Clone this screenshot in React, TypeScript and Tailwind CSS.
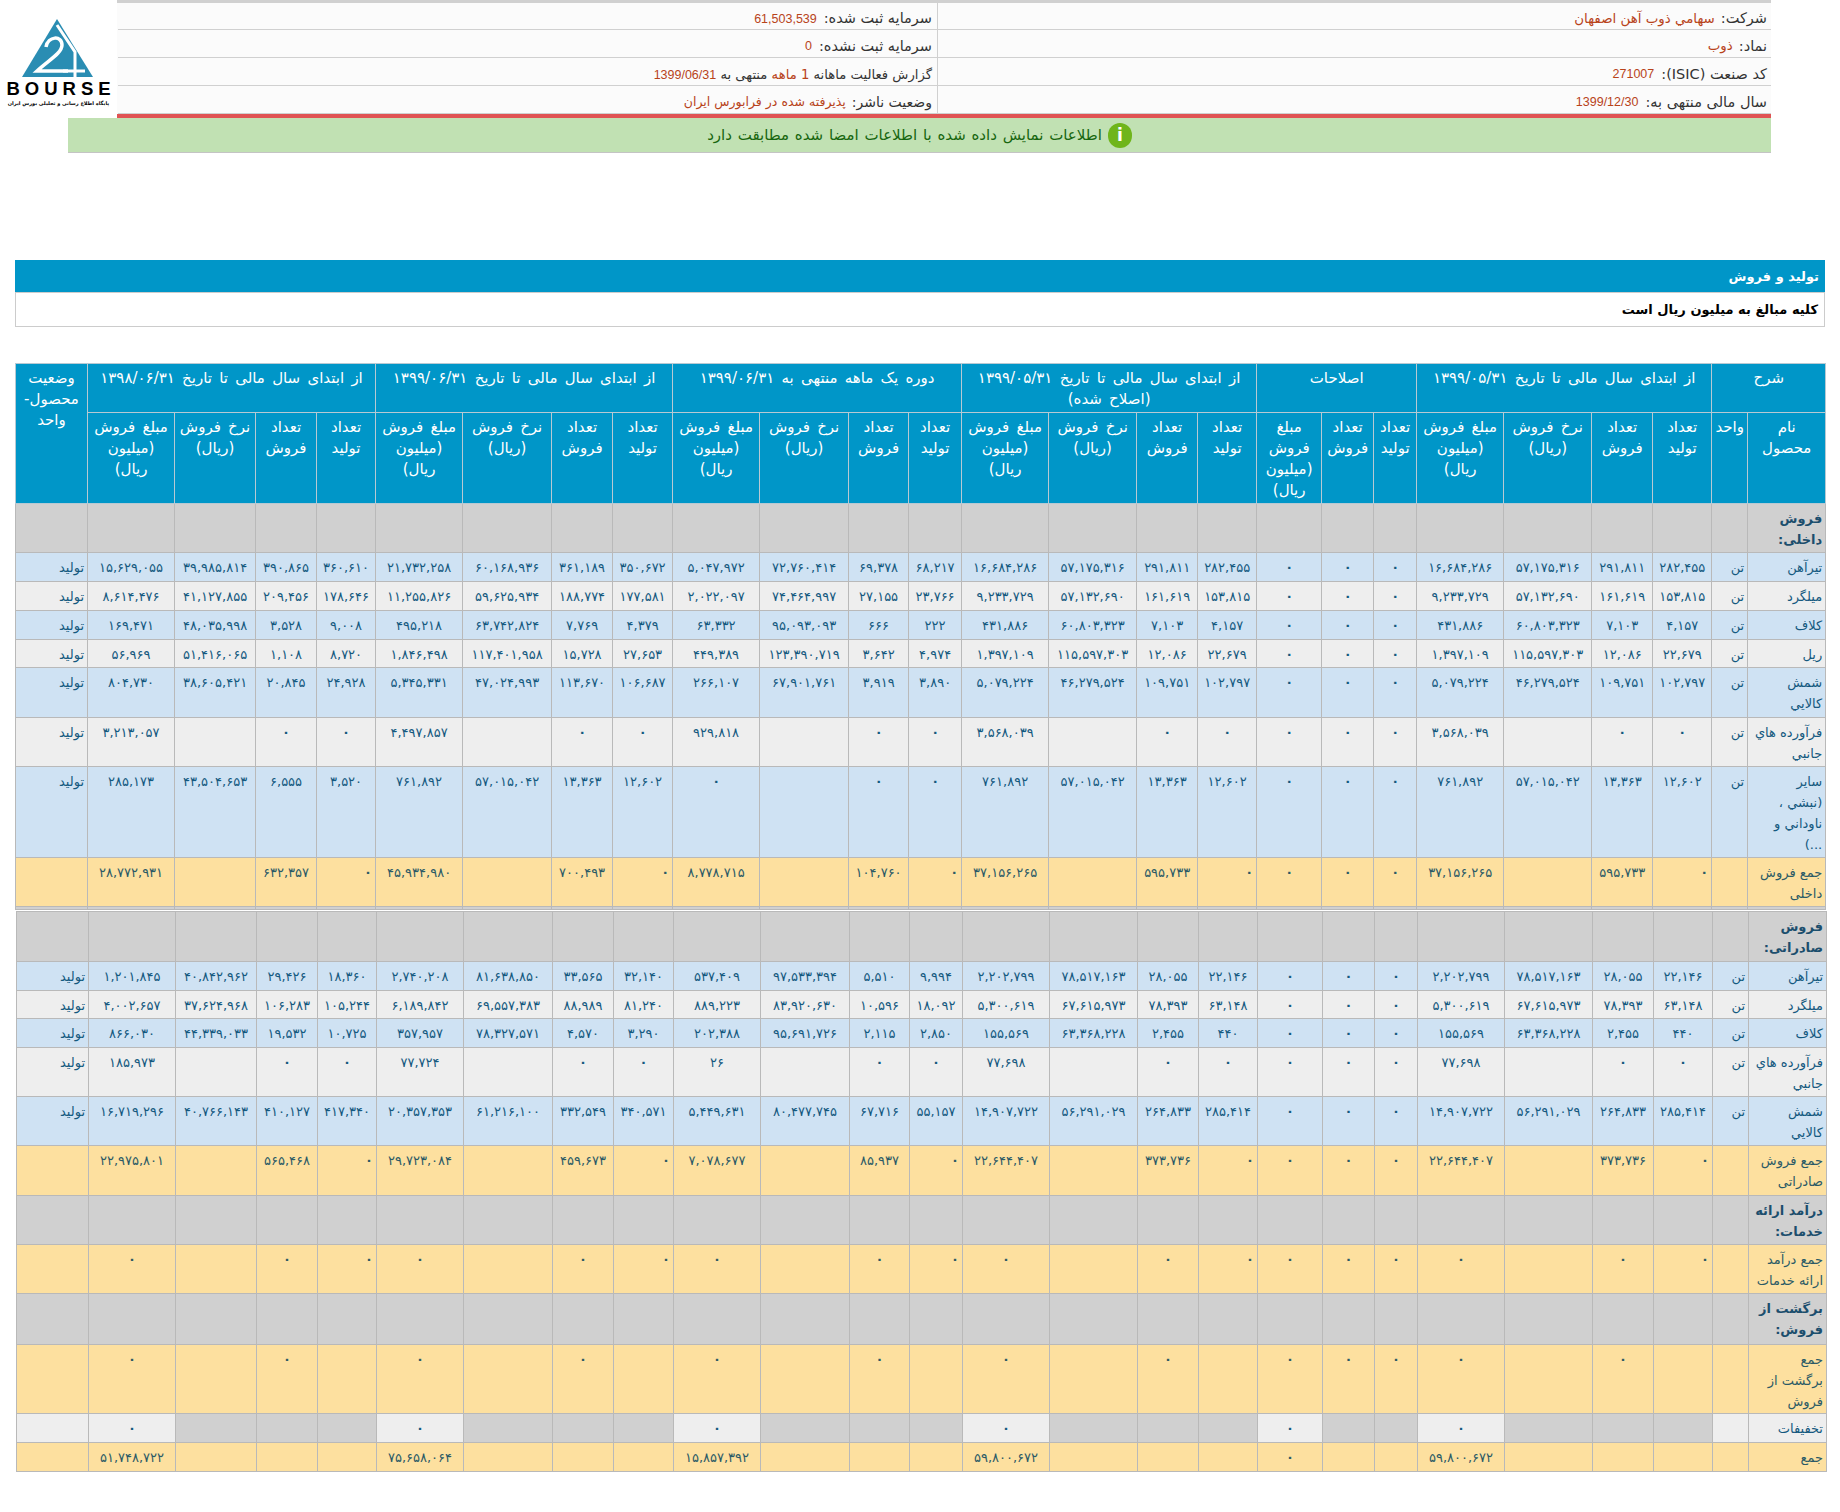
const fa = (s: string) => s.replace(/\d/g, (d) => "۰۱۲۳۴۵۶۷۸۹"[Number(d)]);

const colWidths = [
  "w-[78px]", "w-[36px]", "w-[59px]", "w-[61px]", "w-[88px]", "w-[87px]", "w-[43px]", "w-[52px]", "w-[65px]",
  "w-[59px]", "w-[61px]", "w-[88px]", "w-[87px]", "w-[53px]", "w-[60px]", "w-[89px]", "w-[87px]", "w-[60px]",
  "w-[61px]", "w-[89px]", "w-[87px]", "w-[59px]", "w-[61px]", "w-[81px]", "w-[87px]", "w-[72px]",
];

type Tone = "blue" | "gray" | "sum" | "section" | "discount";

interface Row {
  name: string;
  unit?: string;
  status?: string;
  tone: Tone;
  height: string;
  vals: string[];
}

const split = (s: string) => s.split(" ").map((v) => (v === "-" ? "" : v));

function product(name: string, tone: Tone, height: string, a: string, c: string, d: string, e: string): Row {
  return { name, tone, height, unit: "تن", status: "تولید", vals: split(`${a} 0 0 0 ${a} ${c} ${d} ${e}`) };
}

function total(name: string, height: string, a: string, c: string, d: string, e: string): Row {
  return { name, tone: "sum", height, vals: split(`${a} 0 0 0 ${a} ${c} ${d} ${e}`) };
}

function section(name: string, height: string): Row {
  return { name, tone: "section", height, vals: split(Array(23).fill("-").join(" ")) };
}

const domestic: Row[] = [
  section("فروش\nداخلی:", "h-[49px]"),
  product("تیرآهن", "blue", "h-[29px]", "282,455 291,811 57,175,316 16,684,286", "68,217 69,378 72,760,414 5,047,972", "350,672 361,189 60,168,936 21,732,258", "360,610 390,865 39,985,814 15,629,055"),
  product("میلگرد", "gray", "h-[29px]", "153,815 161,619 57,132,690 9,233,729", "23,766 27,155 74,464,997 2,022,097", "177,581 188,774 59,625,934 11,255,826", "178,646 209,456 41,127,855 8,614,476"),
  product("کلاف", "blue", "h-[29px]", "4,157 7,103 60,803,323 431,886", "222 666 95,093,093 63,332", "4,379 7,769 63,742,824 495,218", "9,008 3,528 48,035,998 169,471"),
  product("ریل", "gray", "h-[28px]", "22,679 12,086 115,597,303 1,397,109", "4,974 3,642 123,390,719 449,389", "27,653 15,728 117,401,958 1,846,498", "8,720 1,108 51,416,065 56,969"),
  product("شمش\nکالايي", "blue", "h-[50px]", "102,797 109,751 46,279,524 5,079,224", "3,890 3,919 67,901,761 266,107", "106,687 113,670 47,024,993 5,345,331", "24,928 20,845 38,605,421 804,730"),
  product("فرآورده هاي\nجانبي", "gray", "h-[49px]", "0 0 - 3,568,039", "0 0 - 929,818", "0 0 - 4,497,857", "0 0 - 3,213,057"),
  product("سایر\n(نبشي ،\nناوداني و\n...)", "blue", "h-[91px]", "12,602 13,363 57,015,042 761,892", "0 0 - 0", "12,602 13,363 57,015,042 761,892", "3,520 6,555 43,504,653 285,173"),
  total("جمع فروش\nداخلی", "h-[49px]", "0 595,733 - 37,156,265", "0 104,760 - 8,778,715", "0 700,493 - 45,934,980", "0 632,357 - 28,772,931"),
];

const exportRows: Row[] = [
  section("فروش\nصادراتی:", "h-[50px]"),
  product("تیرآهن", "blue", "h-[29px]", "22,146 28,055 78,517,163 2,202,799", "9,994 5,510 97,533,394 537,409", "32,140 33,565 81,638,850 2,740,208", "18,360 29,426 40,842,962 1,201,845"),
  product("میلگرد", "gray", "h-[28px]", "63,148 78,393 67,615,973 5,300,619", "18,092 10,596 83,920,630 889,223", "81,240 88,989 69,557,383 6,189,842", "105,244 106,283 37,624,968 4,002,657"),
  product("کلاف", "blue", "h-[29px]", "440 2,455 63,368,228 155,569", "2,850 2,115 95,691,726 202,388", "3,290 4,570 78,327,571 357,957", "10,725 19,532 44,339,033 866,030"),
  product("فرآورده هاي\nجانبي", "gray", "h-[49px]", "0 0 - 77,698", "0 0 - 26", "0 0 - 77,724", "0 0 - 185,973"),
  product("شمش\nکالايي", "blue", "h-[49px]", "285,414 264,833 56,291,029 14,907,722", "55,157 67,716 80,477,745 5,449,631", "340,571 332,549 61,216,100 20,357,353", "417,340 410,127 40,766,143 16,719,296"),
  total("جمع فروش\nصادراتی", "h-[50px]", "0 373,736 - 22,644,407", "0 85,937 - 7,078,677", "0 459,673 - 29,723,084", "0 565,468 - 22,975,801"),
  section("درآمد ارائه\nخدمات:", "h-[49px]"),
  total("جمع درآمد\nارائه خدمات", "h-[49px]", "0 0 - 0", "0 0 - 0", "0 0 - 0", "0 0 - 0"),
  section("برگشت از\nفروش:", "h-[51px]"),
  total("جمع\nبرگشت از\nفروش", "h-[69px]", "- 0 - 0", "- 0 - 0", "- 0 - 0", "- 0 - 0"),
  {
    name: "تخفیفات",
    unit: "",
    status: "",
    tone: "discount",
    height: "h-[29px]",
    vals: split("- - - 0 - - 0 - - - 0 - - - 0 - - - 0 - - - 0"),
  },
  {
    name: "جمع",
    tone: "sum",
    height: "h-[29px]",
    vals: split("- - - 59,800,672 - - 0 - - - 59,800,672 - - - 15,857,392 - - - 75,658,064 - - - 51,748,722"),
  },
];

const toneBg: Record<Tone, string> = {
  blue: "bg-[#cfe2f3]",
  gray: "bg-[#eeeeee]",
  sum: "bg-[#fde09f]",
  section: "bg-[#d0d0d0]",
  discount: "bg-[#d0d0d0]",
};

const bodyCell = "border border-[#b9b9b9] align-top pt-[4px] px-0 leading-[21px]";
const tolidIndex = [0, 7, 11, 15, 19];

function TableRow({ row }: { row: Row }) {
  const isSum = row.tone === "sum";
  const textColor = isSum ? "text-[#2b5a66]" : "text-[#14597f]";
  const isDiscount = row.tone === "discount";
  const edgeBg = isDiscount ? "bg-[#eeeeee]" : toneBg[row.tone];

  return (
    <tr className={row.height}>
      <td
        className={`${bodyCell} ${edgeBg} pr-[3px] text-right whitespace-pre-line ${
          row.tone === "section" ? "text-[13px] font-bold text-[#1c4e6d]" : `text-[13px] ${textColor}`
        }`}
      >
        {row.name}
      </td>
      <td className={`${bodyCell} ${edgeBg} ${textColor} pr-[3px] text-right text-[13px]`}>{row.unit}</td>
      {row.vals.map((v, i) => {
        const lightCell = isDiscount && v !== "";
        return (
          <td
            key={i}
            className={`${bodyCell} ${lightCell ? "bg-[#eeeeee]" : toneBg[row.tone]} ${textColor} text-[13px] ${
              v === "0" ? "font-bold" : ""
            } ${isSum && tolidIndex.includes(i) ? "pr-[3px] text-right" : "text-center"}`}
          >
            {fa(v)}
          </td>
        );
      })}
      <td className={`${bodyCell} ${edgeBg} ${textColor} pr-[3px] text-right text-[13px]`}>{row.status}</td>
    </tr>
  );
}

function Cols() {
  return (
    <colgroup>
      {colWidths.map((w, i) => (
        <col key={i} className={w} />
      ))}
    </colgroup>
  );
}

const headCell =
  "border border-[#b7c9d3] bg-[#0096c8] text-white align-top text-center pt-[4px] px-0 text-[15px] leading-[21px] font-normal whitespace-pre-line [word-spacing:2.5px]";

const blockHeads = ["تعداد\nتولید", "تعداد\nفروش", "نرخ فروش\n(ریال)", "مبلغ فروش\n(میلیون\nریال)"];

function BlockHeads() {
  return (
    <>
      {blockHeads.map((h) => (
        <th key={h} className={headCell}>
          {h}
        </th>
      ))}
    </>
  );
}

function Logo() {
  return (
    <div className="flex h-[114px] w-[117px] shrink-0 flex-col items-center">
      <svg viewBox="0 0 117 80" className="h-[80px] w-[117px]">
        <polygon points="57,19 93,77 22,77" fill="#2a8db3" />
        <path d="M46 47 C48 36 62 35 62 45 C62 53 49 60 37 71 L68 71" fill="none" stroke="#ffffff" strokeWidth="3.5" />
        <path d="M57 25 L75 52 L75 77 M63 71 L85 71" fill="none" stroke="#ffffff" strokeWidth="3" />
      </svg>
      <div className="pl-[5px] font-['Liberation_Sans',sans-serif] text-[18.5px] leading-[17px] font-bold tracking-[5px] text-black">
        BOURSE
      </div>
      <div dir="rtl" className="mt-[2px] whitespace-nowrap font-['DejaVu_Sans',sans-serif] text-[5px] leading-[9px] font-bold text-black">
        پایگاه اطلاع رسانی و تحلیلی بورس ایران
      </div>
    </div>
  );
}

const infoLabel = "text-[14.5px] text-[#333333]";
const infoValue = "text-[13.4px] text-[#b8431a] mr-[6px]";
const infoNumber = "font-['Liberation_Sans',sans-serif] text-[12.5px] text-[#b8431a] mr-[7px]";
const rightCell = "flex items-center border-b border-l border-[#d0d0d0] pr-[4px] pt-[6px]";
const leftCell = "flex items-center border-b border-[#d0d0d0] pr-[5px] pt-[6px]";

function InfoTable() {
  return (
    <div dir="rtl" className="grid h-[114px] flex-1 grid-cols-[834px_819px] border-t-[3px] border-[#d0d0d0] bg-[#fbfbfb]">
      <div className={`${rightCell} h-[27px]`}>
        <span className={infoLabel}>شرکت:</span>
        <span className={infoValue}>سهامي ذوب آهن اصفهان</span>
      </div>
      <div className={`${leftCell} h-[27px]`}>
        <span className={infoLabel}>سرمایه ثبت شده:</span>
        <span className={infoNumber}>61,503,539</span>
      </div>
      <div className={`${rightCell} h-[28px]`}>
        <span className={infoLabel}>نماد:</span>
        <span className={infoValue}>ذوب</span>
      </div>
      <div className={`${leftCell} h-[28px]`}>
        <span className={infoLabel}>سرمایه ثبت نشده:</span>
        <span className={infoNumber}>0</span>
      </div>
      <div className={`${rightCell} h-[28px]`}>
        <span className={infoLabel}>کد صنعت (ISIC):</span>
        <span className={infoNumber}>271007</span>
      </div>
      <div className={`${leftCell} h-[28px]`}>
        <span className="text-[13.2px] text-[#333333]">
          گزارش فعالیت ماهانه <span className="text-[#b8431a]">1 ماهه</span> منتهی به{" "}
          <span className="font-['Liberation_Sans',sans-serif] text-[12.5px] text-[#b8431a]">1399/06/31</span>
        </span>
      </div>
      <div className={`${rightCell} h-[28px]`}>
        <span className={infoLabel}>سال مالی منتهی به:</span>
        <span className={infoNumber}>1399/12/30</span>
      </div>
      <div className={`${leftCell} h-[28px]`}>
        <span className="text-[14px] text-[#333333]">وضعیت ناشر:</span>
        <span className="mr-[6px] text-[12.5px] text-[#b8431a]">پذیرفته شده در فرابورس ایران</span>
      </div>
    </div>
  );
}

export default function App() {
  return (
    <div className="min-h-[1512px] w-[1840px] bg-white pb-[40px] font-['DejaVu_Sans',sans-serif]">
      <div className="flex">
        <Logo />
        <div className="mr-[69px] flex-1">
          <InfoTable />
        </div>
      </div>
      <div className="ml-[117px] mr-[69px] h-[4px] bg-[#e05353]" />
      <div
        dir="rtl"
        className="ml-[68px] mr-[69px] flex h-[35px] items-center justify-center gap-[6px] border-b border-[#c4c4c4] bg-[#c1e1b3] pt-[1px] text-[15px] text-[#17660f] [word-spacing:1px]"
      >
        <div className="flex h-[25px] w-[24px] items-center justify-center rounded-full bg-[#6fb51b] text-[17px] font-bold text-white">
          i
        </div>
        اطلاعات نمایش داده شده با اطلاعات امضا شده مطابقت دارد
      </div>

      <div dir="rtl" className="ml-[15px] mt-[107px] w-[1810px]">
        <div className="flex h-[32px] items-center bg-[#0096c8] pr-[6px] pt-[1px] text-[13px] font-bold text-white">تولید و فروش</div>
        <div className="flex h-[35px] items-center border border-[#cccccc] bg-white pr-[6px] text-[13px] font-bold text-black">
          کلیه مبالغ به میلیون ریال است
        </div>
      </div>

      <table dir="rtl" className="ml-[15px] mt-[36px] w-[1810px] table-fixed border-collapse">
        <Cols />
        <thead>
          <tr className="h-[49px]">
            <th colSpan={2} className={headCell}>شرح</th>
            <th colSpan={4} className={headCell}>{fa("از ابتدای سال مالی تا تاریخ 1399/05/31")}</th>
            <th colSpan={3} className={headCell}>اصلاحات</th>
            <th colSpan={4} className={headCell}>{fa("از ابتدای سال مالی تا تاریخ 1399/05/31\n(اصلاح شده)")}</th>
            <th colSpan={4} className={headCell}>{fa("دوره یک ماهه منتهی به 1399/06/31")}</th>
            <th colSpan={4} className={headCell}>{fa("از ابتدای سال مالی تا تاریخ 1399/06/31")}</th>
            <th colSpan={4} className={headCell}>{fa("از ابتدای سال مالی تا تاریخ 1398/06/31")}</th>
            <th rowSpan={2} className={headCell}>{"وضعیت\nمحصول-\nواحد"}</th>
          </tr>
          <tr className="h-[91px]">
            <th className={headCell}>{"نام\nمحصول"}</th>
            <th className={headCell}>واحد</th>
            <BlockHeads />
            <th className={headCell}>{"تعداد\nتولید"}</th>
            <th className={headCell}>{"تعداد\nفروش"}</th>
            <th className={headCell}>{"مبلغ\nفروش\n(میلیون\nریال)"}</th>
            <BlockHeads />
            <BlockHeads />
            <BlockHeads />
            <BlockHeads />
          </tr>
        </thead>
        <tbody>
          {domestic.map((row, i) => (
            <TableRow key={i} row={row} />
          ))}
          <tr className="h-[3px]">
            {colWidths.map((_, i) => (
              <td key={i} className="border border-[#b9b9b9] bg-[#d0d0d0] p-0" />
            ))}
          </tr>
        </tbody>
      </table>

      <table dir="rtl" className="ml-[16px] mt-[1px] w-[1810px] table-fixed border-collapse">
        <Cols />
        <tbody>
          {exportRows.map((row, i) => (
            <TableRow key={i} row={row} />
          ))}
        </tbody>
      </table>
    </div>
  );
}
